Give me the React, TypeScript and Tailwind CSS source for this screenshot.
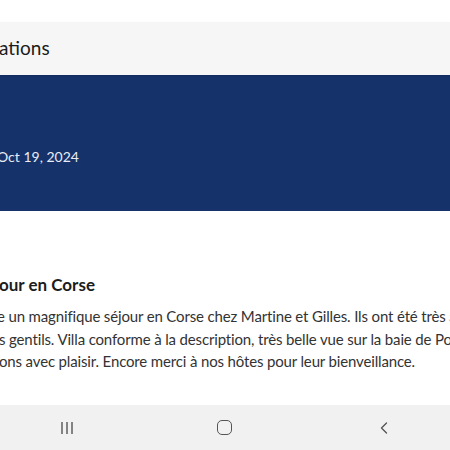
import { ChevronLeft } from "lucide-react";

export default function App() {
  const lines = [
    "e un magnifique séjour en Corse chez Martine et Gilles. Ils ont été très aimables",
    "s gentils. Villa conforme à la description, très belle vue sur la baie de Porto",
    "ons avec plaisir. Encore merci à nos hôtes pour leur bienveillance.",
  ];

  return (
    <div className="w-[450px] h-[450px] overflow-hidden bg-white flex flex-col font-['Lato',sans-serif]">
      <div className="h-[22px] bg-white" />
      <div className="h-[53px] bg-[#f6f6f6] flex items-center shadow-[0_1px_2px_rgba(0,0,0,0.12)] relative z-10">
        <span className="text-[19px] text-[#1c1c1c] ml-[-1px] whitespace-nowrap">ations</span>
      </div>
      <div className="h-[136px] bg-[#15326b] flex items-center">
        <span className="text-[14px] text-[#e8ecf4] ml-[-3px] whitespace-nowrap mt-[26px]">Oct 19, 2024</span>
      </div>
      <div className="flex-1 pt-[62px]">
        <h2 className="text-[17px] font-bold text-[#1c1c1c] whitespace-nowrap ml-[-1px] leading-[24px]">our en Corse</h2>
        <div className="mt-[8px] text-[15px] tracking-[-0.15px] text-[#333] leading-[22.5px]">
          {lines.map((l, i) => (
            <div key={i} className={`whitespace-nowrap ${i === 0 ? "ml-[-3px]" : "ml-[-1px]"}`}>
              {l}
            </div>
          ))}
        </div>
      </div>
      <div className="h-[45px] bg-[#f1f1f1] flex justify-between items-center pl-[59px] pr-[56px] text-[#555]">
        <svg width="16" height="14" viewBox="0 0 16 14" fill="none" stroke="currentColor" strokeWidth="1.4">
          <path d="M3 1v12M8 1v12M13 1v12" />
        </svg>
        <div className="w-[15px] h-[15px] rounded-[5px] border-[1.5px] border-[#555]" />
        <ChevronLeft size={20} strokeWidth={1.6} />
      </div>
    </div>
  );
}
